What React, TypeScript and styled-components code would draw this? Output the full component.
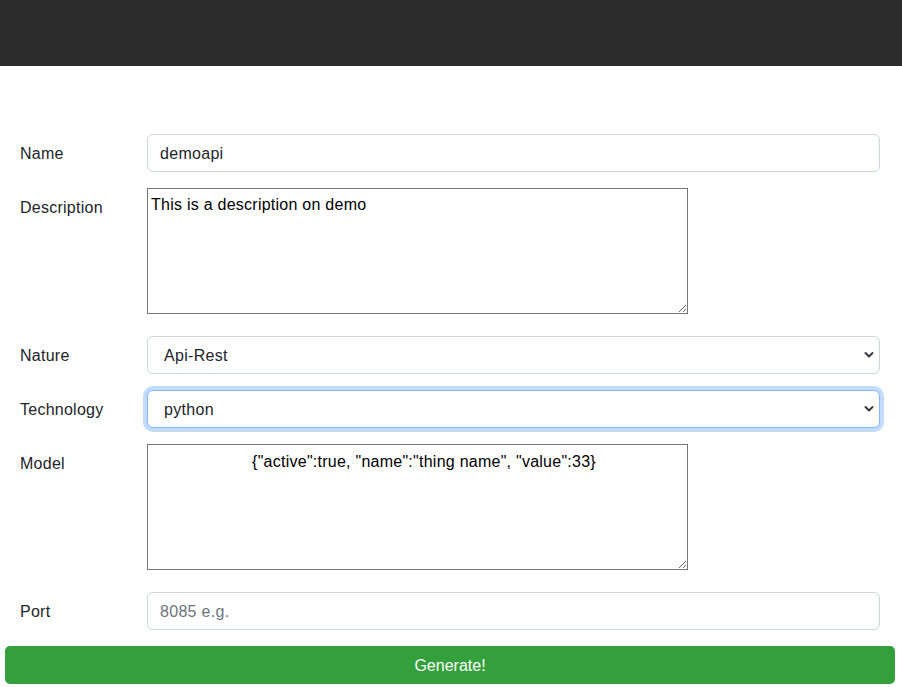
import React from "react";
import styled, { createGlobalStyle, css } from "styled-components";

const GlobalStyle = createGlobalStyle`
  html, body { margin: 0; padding: 0; background: #fff; }
  body {
    font-family: "Liberation Sans", Arial, sans-serif;
    font-size: 16px;
    line-height: 1.5;
    color: #212529;
  }
  * { box-sizing: border-box; }
`;

const Header = styled.header`
  height: 66px;
  background: #2c2c2c;
`;

const Form = styled.form`
  padding: 68px 22px 0 20px;
`;

const Row = styled.div<{ $after?: number }>`
  display: grid;
  grid-template-columns: 127px 1fr;
  align-items: start;
  margin-bottom: ${(p) => p.$after ?? 16}px;
`;

const Label = styled.label`
  padding-top: 8px;
  font-size: 16px;
  line-height: 24px;
  letter-spacing: 0.25px;
  color: #212529;
`;

const fieldBase = css`
  width: 100%;
  height: 38px;
  font-family: "Liberation Sans", Arial, sans-serif;
  font-size: 16px;
  line-height: 24px;
  letter-spacing: 0.3px;
  color: #212529;
  background: #fff;
  border: 1px solid #ced4da;
  border-radius: 6px;
  outline: none;
`;

const Input = styled.input`
  ${fieldBase};
  padding: 7px 12px 5px;
  &::placeholder { color: #6c757d; }
`;

const SelectWrap = styled.div`
  position: relative;
`;

const Select = styled.select<{ $focused?: boolean }>`
  ${fieldBase};
  appearance: none;
  -webkit-appearance: none;
  padding: 7px 36px 5px 16px;
  ${(p) =>
    p.$focused &&
    css`
      border-color: #86b7fe;
      box-shadow: 0 0 0 4px rgba(13, 110, 253, 0.25);
    `}
`;

const Chevron = styled.svg`
  position: absolute;
  right: 6px;
  top: 15px;
  width: 10px;
  height: 8px;
  pointer-events: none;
`;

const TextArea = styled.textarea<{ $center?: boolean }>`
  display: block;
  width: 541px;
  height: 126px;
  padding: ${(p) => (p.$center ? "7px 3px 2px 16px" : "6px 3px 2px")};
  font-family: "Liberation Sans", Arial, sans-serif;
  font-size: 16px;
  line-height: 19px;
  letter-spacing: 0.25px;
  color: #000;
  border: 1px solid #767676;
  border-radius: 0;
  text-align: ${(p) => (p.$center ? "center" : "left")};
  outline: none;
  resize: both;
`;

const Button = styled.button`
  display: block;
  width: 890px;
  height: 38px;
  margin: 0 7px 0 5px;
  padding-top: 2px;
  background: #33a03b;
  color: #fff;
  border: none;
  border-radius: 5px;
  font-family: "Liberation Sans", Arial, sans-serif;
  font-size: 16px;
  line-height: 24px;
`;

const ChevronIcon = () => (
  <Chevron viewBox="0 0 10 8">
    <path d="M1.5 2 L5 5.5 L8.5 2" fill="none" stroke="#343a40" strokeWidth="2" strokeLinecap="round" strokeLinejoin="round" />
  </Chevron>
);

export default function App() {
  return (
    <>
      <GlobalStyle />
      <Header />
      <Form onSubmit={(e) => e.preventDefault()}>
        <Row>
          <Label>Name</Label>
          <Input defaultValue="demoapi" />
        </Row>
        <Row $after={22}>
          <Label>Description</Label>
          <TextArea defaultValue="This is a description on demo" />
        </Row>
        <Row>
          <Label>Nature</Label>
          <SelectWrap>
            <Select defaultValue="Api-Rest">
              <option>Api-Rest</option>
            </Select>
            <ChevronIcon />
          </SelectWrap>
        </Row>
        <Row>
          <Label>Technology</Label>
          <SelectWrap>
            <Select $focused defaultValue="python">
              <option>python</option>
            </Select>
            <ChevronIcon />
          </SelectWrap>
        </Row>
        <Row $after={22}>
          <Label>Model</Label>
          <TextArea $center defaultValue={'{"active":true, "name":"thing name", "value":33}'} />
        </Row>
        <Row>
          <Label>Port</Label>
          <Input placeholder="8085 e.g." />
        </Row>
      </Form>
      <Button type="button">Generate!</Button>
    </>
  );
}
